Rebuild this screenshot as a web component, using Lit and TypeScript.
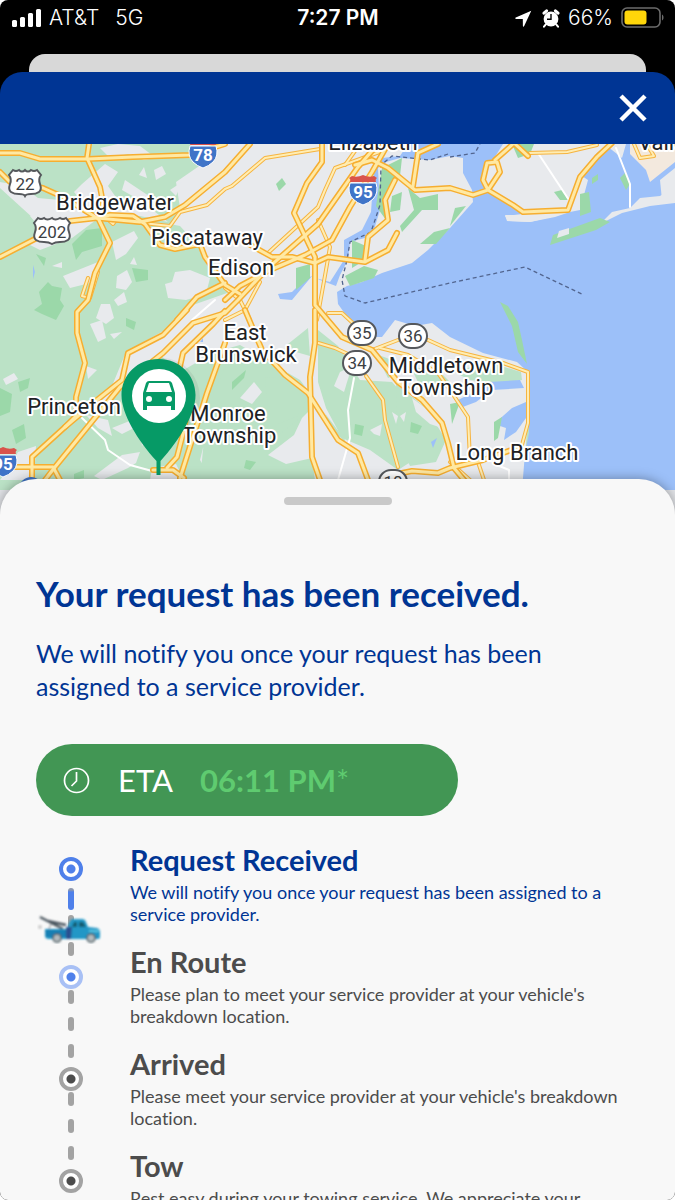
import { LitElement, html, svg, css } from "lit";
import { customElement } from "lit/decorators.js";

/* Shapes of the map, as point lists in map units. */
const URBAN = [
  "190,144 675,144 675,350 530,372 524,480 330,480 345,440 300,380 240,345 215,352 180,372 160,355 122,390 98,406 112,386 126,352 165,330 190,306 230,292 213,262 180,226 170,224 180,208 176,182 205,162",
  "0,182 22,186 38,198 60,200 75,214 60,226 44,228 0,188",
  "30,216 58,202 90,206 96,220 72,238 40,250 28,244 45,234",
  "82,184 105,164 118,172 108,186 118,200 150,208 168,222 140,216 100,212 84,204 74,192",
  "125,180 155,200 150,206 122,190",
  "63,276 88,266 98,262 94,282 70,288",
  "112,242 134,231 138,238 126,254 116,260",
  "139,175 144,167 147,178", "154,170 162,166 166,174 156,180", "170,190 182,182 176,196",
  "165,284 172,282 175,272 190,270 210,278 206,294 186,300 168,298",
  "117,276 127,270 132,282 126,290 116,288", "114,300 124,292 127,302 118,306",
  "101,304 110,304 114,318 106,324 96,318", "90,324 102,320 106,338 98,342", "110,334 122,332 114,339",
  "52,266 62,262 62,268", "3,379 14,373 18,379 6,385", "86,366 97,370 88,379", "130,264 134,257 137,265",
  "18,452 36,446 34,480 0,480 10,466", "112,428 132,420 134,428 122,434", "122,455 140,452 136,463 128,468 102,480 94,476",
  "140,428 152,420 150,436 142,446", "203,448 210,444 212,464 206,470 200,460",
  "86,415 108,420 112,436 98,428", "152,468 176,464 184,480 150,480",
  "236,378 256,378 260,398 246,404 230,392", "268,455 294,435 302,418 320,400 332,430 350,446 340,466 330,480 315,480 312,458 286,464",
  "100,148 118,144 140,146 156,158 144,160 128,154 110,158",
];

const WOODS = [
  "214,392 232,352 262,362 284,376 308,392 300,418 280,434 266,456 290,466 270,480 200,480 204,440",
  "288,344 308,328 310,356 296,352", "265,378 290,376 304,390 298,416 278,424 268,410",
  "318,330 338,346 360,380 392,382 408,400 428,440 420,456 398,470 370,450 342,438 326,408 318,382",
  "396,384 426,408 446,440 436,462 410,466 398,440",
  "376,354 392,360 402,372 388,378", "410,366 440,372 450,382 420,386",
  "488,362 521,372 522,380 500,384 470,380 454,372",
];

const WOODS_GAPS = [
  "340,372 352,366 344,392 334,386", "370,430 382,424 380,436 374,434", "392,412 398,416 396,424", "400,416 406,412 404,422",
  "254,382 262,392 252,404 240,398", "412,398 428,410 442,428 430,424 416,412",
];

const PARKS = [
  "72,244 86,230 102,228 102,246 82,252 76,260", "39,292 48,282 52,286 62,288 60,300 64,306 56,320 42,314 34,310 42,304",
  "36,254 46,258 44,266", "132,268 148,270 148,280 136,282", "276,184 282,178 286,184 279,191",
  "296,268 310,264 310,278 296,290", "382,168 402,158 400,176 386,196 386,220 376,206",
  "392,196 402,192 400,210 390,212", "408,188 420,198 438,194 438,210 422,210 402,232 400,226 414,210", "420,244 434,232 450,228 436,244",
  "352,240 366,246 362,262 352,268", "345,276 364,266 378,270 374,278 350,286", "455,208 466,206 450,226",
  "512,144 534,144 530,154 518,158", "554,192 562,190 568,200 560,200", "580,194 589,192 591,212 580,216",
  "592,178 598,174 598,180 592,184", "620,178 626,172 630,184 626,190",
  "500,302 508,306 518,322 522,340 527,364 518,352 512,326",
  "0,388 12,394 10,412 0,416", "18,382 30,378 28,388 20,392", "12,430 24,424 26,438 16,444",
  "355,424 364,426 362,436 354,434", "246,460 256,462 250,470 244,468", "411,422 422,426 418,434 410,432",
  "232,382 246,370 244,378 232,390", "74,474 84,470 84,478 74,480", "450,404 460,402 452,424",
  "494,422 502,417 498,438 494,441", "126,318 136,322 134,330 126,326",
];

const WATER = [
  "338,304 337,292 347,286 362,282 382,273 412,263 428,250 450,228 473,202 472,190 463,173 463,158 450,156 430,160 400,158 386,162 378,168 380,210 372,236 350,242 348,260 340,275 336,286 320,280 312,276 292,300 280,299 278,294 292,292 308,276 330,282 344,260 344,240 362,230 371,212 374,168 382,158 400,156 408,144 503,144 493,160 483,170 487,190 513,205 522,215 505,215 507,221 530,222 555,217 570,212 580,210 588,180 582,176 597,153 610,144 675,144 675,480 675,490 522,490 525,453 529,433 528,372 517,362 483,353 450,337 432,323 415,326 395,320 382,337 374,337 362,326 348,318",
  "458,400 474,392 488,382 520,380 524,388 492,390 476,402 460,408",
  "494,424 512,408 526,402 526,418 516,432 504,440 506,428",
  "431,442 437,438 433,448", "200,342 203,338 203,342", "33,265 35,272 33,279",
];

const SANDS = [
  "505,216 522,214 555,216 530,222 508,221",
  "600,224 612,212 630,208 640,198 660,196 675,186 675,203 650,206 622,213",
  "604,144 626,144 622,158 612,150", "660,180 675,168 675,202 662,200",
];

const BEACHES = ["630,144 675,144 675,162 650,182 646,170 630,154"];

const WIDE_ROADS = [
  "0,153 20,153 40,159 88,159 133,157 190,155 225,144",
  "89,144 87,158 100,187 103,203 98,218 110,243 95,273 88,300 77,312 77,333 85,363 76,397 76,416 65,427 32,457 32,478",
  "0,172 10,182 43,188 63,197 97,218",
  "0,257 33,240 70,221 97,218 110,215 133,216 145,224 160,245 175,249 200,244 205,257 225,285 240,294",
  "97,218 140,222 165,217 185,205 225,172 250,144",
  "322,144 322,162 307,183 294,213 315,257 315,305 342,337 372,350 398,382 422,400 442,423 448,443 454,468 464,480",
  "378,144 358,167 318,224 268,268 238,300 225,313 193,323 163,353 120,387 55,467 45,480",
  "388,144 372,172 350,207 332,240 305,255 270,270 240,286 225,300",
  "187,310 163,335 128,353 122,380 97,400 65,427",
  "177,320 197,297 225,283", "225,311 213,324 183,353 178,375",
  "245,310 262,350 285,375 308,393 338,440 358,453 368,480",
  "315,310 315,343 310,377 312,457 320,480",
  "225,343 207,393 180,478", "190,396 184,430 177,457 167,468", "153,470 173,470 184,478", "15,467 53,467 60,480",
  "355,165 372,160 388,168 415,190 450,188 473,195 488,190 500,172 497,162 487,163 483,180 488,190 513,205 523,212 568,210 580,177 597,157 612,143",
  "495,160 513,144", "515,144 528,156", "438,144 418,153 413,186",
  "395,180 385,200 388,220 368,237 365,260",
  "245,242 272,257 292,257 315,263 328,257 365,262 388,250 397,233",
  "402,473 412,471 438,473 450,468 483,460 520,447",
];

const NARROW_ROADS = [
  "103,215 113,224 116,220 170,226 180,212 207,205 225,189 232,186 265,158 320,149",
  "88,278 82,296 90,298 98,272",
  "385,150 335,168 325,190 318,207 268,253",
  "318,220 330,247 326,270 317,320",
  "315,342 335,348 350,355", "366,376 383,400 385,420 398,467", "328,313 342,313 356,326",
  "372,350 398,340", "428,340 450,350 503,363 528,372 528,423 520,452",
  "380,348 408,355 438,373 450,390 468,417 470,460",
  "530,153 567,152 597,145", "634,144 640,158 654,156 648,146",
  "225,320 245,310 260,282", "478,462 484,480", "450,462 470,480",
  "225,288 240,300 250,320", "360,144 345,165",
];

const LOCAL_ROADS = [
  "82,418 105,440 108,450 130,465 152,471", "354,378 348,410 350,438 338,480",
  "538,153 569,200", "616,148 630,184 630,207", "215,300 192,320", "497,465 509,470 509,480",
];

const FERRY = [
  "450,157 475,153 480,144", "448,154 430,160 392,156 381,165 380,205 371,232 350,242 347,260 342,280 345,296 365,303 450,283 525,267 584,295",
];

const PLACES: [string, number, number][] = [
  ["Elizabeth", 373, 150], ["Valley", 667, 150], ["Bridgewater", 115, 210], ["Piscataway", 207, 245],
  ["Edison", 241, 275], ["East", 245, 340], ["Brunswick", 246, 362], ["Princeton", 74, 414],
  ["Monroe", 228, 421], ["Township", 229, 443], ["Middletown", 446, 373], ["Township", 446, 395],
  ["Long Branch", 517, 460],
];

const OVALS: [string, number, number][] = [["35", 362, 333], ["34", 357, 363], ["36", 413, 336], ["18", 393, 482]];
const US_ROUTES: [string, number, number, number][] = [["22", 25, 183, 0], ["202", 52, 231, 2]];
const INTERSTATES: [string, number, number][] = [["78", 203, 154], ["95", 363, 191], ["95", 3, 463]];

type Tone = "active" | "next" | "idle";
interface Step { title: string; text: string; tone: Tone; dashes: string[] }

const STEPS: Step[] = [
  { title: "Request Received", text: "We will notify you once your request has been assigned to a service provider.", tone: "active", dashes: ["done", "", ""] },
  { title: "En Route", text: "Please plan to meet your service provider at your vehicle's breakdown location.", tone: "next", dashes: ["", "", ""] },
  { title: "Arrived", text: "Please meet your service provider at your vehicle's breakdown location.", tone: "idle", dashes: ["", "", ""] },
  { title: "Tow", text: "Rest easy during your towing service. We appreciate your patience.", tone: "idle", dashes: [] },
];

@customElement("status-bar")
export class StatusBar extends LitElement {
  static styles = css`
    :host { display: grid; flex: none; grid-template-columns: 1fr auto 1fr; align-items: center; height: 36px; padding: 0 10px 0 11px; color: #fff; font: 400 21px/24px Inter, "Liberation Sans", sans-serif; }
    .side { display: flex; align-items: center; }
    .carrier { margin: 0 16px 0 7px; }
    .end { justify-content: flex-end; }
    .time { font-weight: 600; }
    .light { font-weight: 300; }
    .alarm { margin: 0 8px 0 10px; }
    .battery { margin-left: 8px; }
    svg { display: block; flex: none; }
  `;
  render() {
    return html`
      <div class="side light">
        <svg width="31" height="20" viewBox="0 0 31 20" fill="#fff" aria-hidden="true">
          <rect x="1" y="12" width="5" height="7" rx="1.5"/><rect x="9" y="9" width="5" height="10" rx="1.5"/>
          <rect x="17" y="5" width="5" height="14" rx="1.5"/><rect x="25" y="1" width="5" height="18" rx="1.5"/>
        </svg>
        <span class="carrier">AT&amp;T</span><span>5G</span>
      </div>
      <div class="time">7:27 PM</div>
      <div class="side end light">
        <svg width="17" height="17" viewBox="0 0 17 17" fill="#fff" aria-hidden="true"><path d="M16.3.7.8 7.6c-.8.4-.6 1.3.2 1.3l6.8.1.1 6.9c0 .9 1 1 1.3.2z"/></svg>
        <svg class="alarm" width="18" height="19" viewBox="0 0 18 19" aria-hidden="true">
          <circle cx="9" cy="10" r="7.4" fill="#fff"/>
          <path d="M2 4.200 4.600 1.800M16 4.200 13.400 1.800" stroke="#fff" stroke-width="3" stroke-linecap="round"/>
          <path d="m3.6 15.6-1.6 2m12.4-2 1.6 2" stroke="#fff" stroke-width="2" stroke-linecap="round"/>
          <path d="M9 5v5.2H5" fill="none" stroke="#000" stroke-width="1.4"/>
        </svg>
        <span>66%</span>
        <svg class="battery" width="44" height="22" viewBox="0 0 44 22" aria-hidden="true">
          <rect x="1" y="1" width="38" height="19" rx="5" fill="none" stroke="#6c6c6c" stroke-width="1.6"/>
          <rect x="3.500" y="3.500" width="22" height="14" rx="3" fill="#ffd60a"/>
          <path d="M41 7.500c2 .8 2 5.200 0 6z" fill="#6c6c6c"/>
        </svg>
      </div>`;
  }
}

@customElement("area-map")
export class AreaMap extends LitElement {
  static styles = css`
    :host { display: block; flex: none; height: 371px; background: #e2e4e8; }
    .map { display: block; width: 100%; height: 346px; background: #bbe2c6; }
    .urban, .sand { fill: #e8eaed; }
    .beach { fill: #f3e9de; }
    .woods { fill: #bbe2c6; }
    .park { fill: #9bd8a9; }
    .water { fill: #9cc0f9; }
    .line { fill: none; stroke-linejoin: round; stroke-linecap: round; }
    .wide-edge { stroke: #f6ae30; stroke-width: 6px; }
    .wide-core { stroke: #ffe9a3; stroke-width: 3px; }
    .thin-edge { stroke: #f6b440; stroke-width: 4px; }
    .thin-core { stroke: #ffedb3; stroke-width: 2px; }
    .local { stroke: #fff; stroke-width: 2px; }
    .ferry { stroke: #52658f; stroke-width: 1.3px; stroke-dasharray: 4 3; stroke-linecap: butt; }
    text { font-family: Roboto, "Liberation Sans", sans-serif; text-anchor: middle; }
    .place { font-size: 22px; fill: #202124; stroke: #fff; stroke-width: 4px; stroke-linejoin: round; paint-order: stroke; }
    .route { font-size: 17px; fill: #3c4043; }
    .inter { font-size: 17px; font-weight: 700; fill: #fff; }
    .plate { fill: #fff; stroke: #55585c; stroke-width: 2px; }
  `;
  private lines(list: string[], cls: string) {
    return list.map((p) => svg`<polyline class="line ${cls}" points=${p} />`);
  }
  private areas(list: string[], cls: string) {
    return list.map((p) => svg`<polygon class=${cls} points=${p} />`);
  }
  render() {
    return html`
      <svg class="map" viewBox="0 144 675 346" preserveAspectRatio="xMidYMid slice" role="img" aria-label="Map of the breakdown location">
        ${this.areas(URBAN, "urban")} ${this.areas(WOODS, "woods")} ${this.areas(WOODS_GAPS, "urban")}
        ${this.areas(WATER, "water")} ${this.areas(SANDS, "sand")} ${this.areas(BEACHES, "beach")}
        <polygon class="park" points="550,245 553,235 600,218 610,222 596,230" />
        ${this.areas(PARKS, "park")}
        <polygon class="sand" points="557,238 559,231 569,228 569,234" />
        ${this.lines(LOCAL_ROADS, "local")} ${this.lines(FERRY, "ferry")}
        ${this.lines(NARROW_ROADS, "thin-edge")} ${this.lines(NARROW_ROADS, "thin-core")}
        ${this.lines(WIDE_ROADS, "wide-edge")} ${this.lines(WIDE_ROADS, "wide-core")}
        ${PLACES.map(([name, x, y]) => svg`<text class="place" x=${x} y=${y}>${name}</text>`)}
        ${OVALS.map(([n, x, y]) => svg`<rect class="plate" x=${x - 14} y=${y - 12} width="28" height="24" rx="12"/><text class="route" x=${x} y=${y + 6}>${n}</text>`)}
        ${US_ROUTES.map(([n, x, y, w]) => svg`
          <path class="plate" transform="translate(${x} ${y})" d="M${-12 - w}-13q3 2 6 0 3 3 ${6 + w} 0 3 3 ${6 + w} 0 3 2 6 0l4 5q-3 4-1 9 2 6-1 8-3 2-8 2-5 0-${6 + w} 2-${1 + w}-2-${6 + w}-2-5 0-8-2-3-2-1-8 2-5-1-9z"/>
          <text class="route" x=${x} y=${y + 7}>${n}</text>`)}
        ${INTERSTATES.map(([n, x, y]) => svg`
          <g transform="translate(${x} ${y})">
            <path d="M-13-8h26q3 10-3 16-4 4-10 6-6-2-10-6-6-6-3-16z" fill="#3f74c8" stroke="#fff"/>
            <path d="M-13-9q1-3-1-4l3-2q5 2 11-1 6 3 11 1l3 2q-2 1-1 4z" fill="#d9534b"/>
            <text class="inter" y="7">${n}</text>
          </g>`)}
        <circle cx="31" cy="489" r="12" fill="#3f74c8" />
        <ellipse cx="162" cy="398" rx="38" ry="40" fill="#000" opacity=".06" />
        <path d="M158.500 359c-21 0-37 16-37 36 0 19 16 45 35 66v14h4v-14c19-21 35-47 35-66 0-20-16-36-37-36z" fill="#069a66"/>
        <circle cx="159" cy="396" r="27" fill="#fff"/>
        <path fill="#069a66" fill-rule="evenodd" d="M149 381h20q2 0 3 2l3 10v17h-4v-4h-24v4h-4v-17l3-10q1-2 3-2zm0 2-3 9h26l-3-9zm0 13a3 3 0 1 0 0 6 3 3 0 0 0 0-6zm20 0a3 3 0 1 0 0 6 3 3 0 0 0 0-6z"/>
      </svg>`;
  }
}

@customElement("progress-rail")
export class ProgressRail extends LitElement {
  static styles = css`
    :host { display: flex; flex-direction: column; align-items: center; position: relative; width: 70px; padding-top: 16px; }
    .leg { display: flex; flex-direction: column; align-items: center; gap: 13px; padding: 1px 0 9px; }
    .first { padding-top: 7px; }
    .dash { width: 6px; height: 14px; border-radius: 3px; background: #a3a3a3; }
    .done { height: 22px; margin-bottom: -8px; background: linear-gradient(#8d97ad 2px, #4f80ea 4px); }
    .dot { box-sizing: border-box; flex: none; width: 24px; height: 24px; border: 4px solid #a3a3a3; border-radius: 50%; background: radial-gradient(circle, #4c4c4c 4px, #fff 5px); }
    .active { border-color: #4f80ea; background: radial-gradient(circle, #4f80ea 4px, #fff 5px); }
    .next { border-color: #a8c0f5; background: radial-gradient(circle, #4f80ea 4px, #fff 5px); }
    .truck { position: absolute; left: 1px; top: 71px; }
  `;
  render() {
    return html`
      ${STEPS.map((s, i) => html`
        <span class="dot ${s.tone}"></span>
        ${s.dashes.length ? html`<span class="leg ${i === 0 ? "first" : ""}">${s.dashes.map((d) => html`<span class="dash ${d}"></span>`)}</span>` : null}`)}
      <svg class="truck" width="66" height="32" viewBox="0 0 66 32" aria-hidden="true">
        <defs><filter id="soft"><feGaussianBlur stdDeviation=".9"/></filter></defs>
        <g filter="url(#soft)">
          <path d="M3 5 26 17M11 9l18 4" stroke="#4a555e" stroke-width="2.400" fill="none"/>
          <path d="M14 12 12 17" stroke="#7c868c" stroke-width="1"/><circle cx="3" cy="15" r="2" fill="#ccc"/>
          <path d="M8 17h22l3-8q1-2 3-2h9q3 0 4 3l2 5 9 1q3 1 3 4v5q0 2-3 2H12q-4 0-4-3z" fill="#2097c6"/>
          <path d="M8 18h21v7H9z" fill="#187fb4"/><path d="M29 15h6l-1 12h-5z" fill="#2b4f90"/>
          <path d="m35 15 2-5h3v5zM42 10h4l3 5h-7z" fill="#155c70"/>
          <path d="M52 18h10v2H52z" fill="#56c2df"/>
          <circle cx="20" cy="26" r="4" fill="#b3babd" stroke="#4c6068" stroke-width="1.600"/>
          <circle cx="54" cy="26" r="4" fill="#b3babd" stroke="#4c6068" stroke-width="1.600"/>
        </g>
      </svg>`;
  }
}

@customElement("app-root")
export class AppRoot extends LitElement {
  static styles = css`
    :host { display: block; height: 100vh; overflow: hidden; background: #fff; font-family: Lato, "Noto Sans", sans-serif; font-variant-ligatures: none; }
    .screen { display: flex; flex-direction: column; height: 100%; overflow: hidden; border-radius: 8px; background: #000; }
    .behind { flex: none; height: 18px; margin: 18px 29px 0; border-radius: 16px 16px 0 0; background: #d8d8d8; }
    .bar { display: flex; flex: none; justify-content: flex-end; align-items: center; height: 72px; padding: 0 20px; border-radius: 22px 22px 0 0; background: #003594; }
    .close { display: grid; place-items: center; width: 44px; height: 44px; padding: 0; border: 0; background: none; cursor: pointer; }
    .sheet { position: relative; flex: 1 0 auto; margin-top: -36px; padding: 18px 36px 0; border-radius: 36px 36px 0 0; background: #f8f8f8; box-shadow: 0 0 12px rgb(0 0 0 / 35%); color: #003594; }
    .grip { width: 108px; height: 8px; margin: 0 auto; border-radius: 4px; background: #c9c9c9; }
    h1 { margin: 66px 0 0; font-size: 35px; line-height: 44px; font-weight: 700; }
    .lead { max-width: 540px; margin: 22px 0 0; font-size: 25px; line-height: 33px; }
    .eta { display: flex; box-sizing: border-box; align-items: center; width: 70%; height: 72px; margin-top: 41px; padding: 0 27px; border-radius: 36px; background: #429654; color: #fff; font-size: 31px; white-space: nowrap; }
    .eta svg { flex: none; margin-right: 28px; }
    .eta time { margin-left: 27px; color: #5fcb70; font-weight: 700; }
    .star { font-weight: 400; }
    .progress { display: flex; gap: 24px; margin-top: 25px; }
    .steps { flex: 1; margin: 0; padding: 0; list-style: none; }
    .step { padding-bottom: 18px; color: #4c4c4c; }
    .step.active { color: #003594; }
    h2 { margin: 0 0 2px; font-size: 29px; line-height: 38px; font-weight: 700; }
    .step p { margin: 0; font-size: 18px; line-height: 22px; }
  `;
  render() {
    return html`
      <div class="screen">
        <status-bar></status-bar>
        <div class="behind"></div>
        <header class="bar">
          <button class="close" aria-label="Close">
            <svg width="28" height="28" viewBox="0 0 28 28"><path d="m2 2 24 24M26 2 2 26" stroke="#fff" stroke-width="4.500"/></svg>
          </button>
        </header>
        <area-map></area-map>
        <main class="sheet">
          <div class="grip"></div>
          <h1>Your request has been received.</h1>
          <p class="lead">We will notify you once your request has been assigned to a service provider.</p>
          <div class="eta">
            <svg width="27" height="27" viewBox="0 0 27 27" fill="none" stroke="#fff" stroke-width="1.700" aria-hidden="true"><circle cx="13.500" cy="13.500" r="12"/><path d="M13.500 5v9l-5 5"/></svg>
            <span>ETA</span><time>06:11 PM<span class="star">*</span></time>
          </div>
          <section class="progress">
            <progress-rail></progress-rail>
            <ol class="steps">
              ${STEPS.map((s) => html`<li class="step ${s.tone}"><h2>${s.title}</h2><p>${s.text}</p></li>`)}
            </ol>
          </section>
        </main>
      </div>`;
  }
}
